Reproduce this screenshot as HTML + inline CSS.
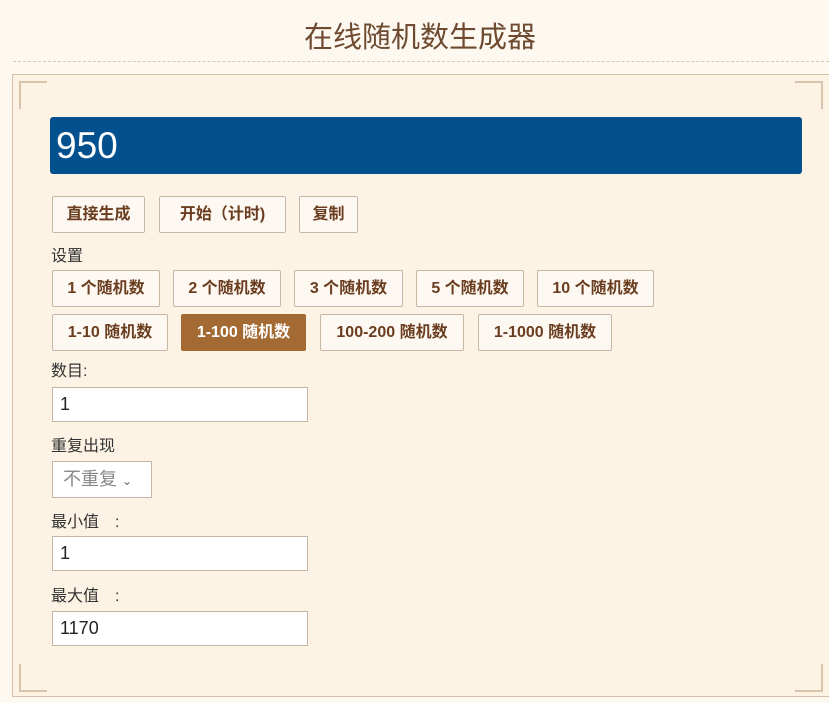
<!DOCTYPE html>
<html><head><meta charset="utf-8"><style>
body{margin:0;width:829px;height:703px;background:#fdf9f1;font-family:"Liberation Sans","Noto Sans CJK SC",sans-serif;position:relative;overflow:hidden}
.title{position:absolute;top:14px;left:0;width:840px;text-align:center;font-size:29px;color:#6e4a30}
.dash{position:absolute;top:61px;left:13px;width:816px;border-top:1px dashed #d8c8b0}
.box{position:absolute;left:12px;top:74px;width:830px;height:621px;border:1px solid #d6bfa5;background:#fcf3e5}
.res{position:absolute;left:50px;top:117px;width:752px;height:57px;background:#03508f;border-radius:3px;color:#fff;font-size:37px;line-height:58px;padding-left:6px;box-sizing:border-box}
.btn{position:absolute;height:37px;border:1px solid #c9b7a6;border-radius:2px;background:#fdf8f1;color:#6a3d20;font-weight:bold;font-size:16px;line-height:36px;text-align:center;box-sizing:border-box}
.btn.on{background:#a46a34;color:#fff;border-color:#a46a34}
.lbl{position:absolute;left:51px;font-size:16px;color:#333}
.inp{position:absolute;left:52px;width:256px;height:35px;background:#fff;border:1px solid #c5b5a5;box-sizing:border-box;font-size:18px;line-height:33px;padding-left:7px;color:#222}
.sel{position:absolute;left:52px;top:461px;width:100px;height:37px;background:#fff;border:1px solid #c5b5a5;box-sizing:border-box;font-size:18px;color:#888;line-height:35px;padding-left:10px}
.corner{position:absolute;width:26px;height:26px;border:0 solid #d8c3ad}
</style></head><body>
<div class="title">在线随机数生成器</div>
<div class="dash"></div>
<div class="box"></div>
<div class="corner" style="left:19px;top:81px;border-top-width:2px;border-left-width:2px"></div>
<div class="corner" style="left:795px;top:81px;border-top-width:2px;border-right-width:2px"></div>
<div class="corner" style="left:19px;top:664px;border-bottom-width:2px;border-left-width:2px"></div>
<div class="corner" style="left:795px;top:664px;border-bottom-width:2px;border-right-width:2px"></div>
<div class="res">950</div>
<div class="btn" style="left:52px;top:196px;width:93px">直接生成</div>
<div class="btn" style="left:159px;top:196px;width:127px">开始（计时)</div>
<div class="btn" style="left:299px;top:196px;width:59px">复制</div>
<div class="lbl" style="top:242px">设置</div>
<div class="btn" style="left:52px;top:270px;width:108px">1 个随机数</div>
<div class="btn" style="left:173px;top:270px;width:108px">2 个随机数</div>
<div class="btn" style="left:294px;top:270px;width:109px">3 个随机数</div>
<div class="btn" style="left:416px;top:270px;width:108px">5 个随机数</div>
<div class="btn" style="left:537px;top:270px;width:117px">10 个随机数</div>
<div class="btn" style="left:52px;top:314px;width:116px">1-10 随机数</div>
<div class="btn on" style="left:181px;top:314px;width:125px">1-100 随机数</div>
<div class="btn" style="left:320px;top:314px;width:144px">100-200 随机数</div>
<div class="btn" style="left:478px;top:314px;width:134px">1-1000 随机数</div>
<div class="lbl" style="top:357px">数目:</div>
<div class="inp" style="top:387px">1</div>
<div class="lbl" style="top:432px">重复出现</div>
<div class="sel">不重复 <span style="font-size:12px;color:#666">&#8964;</span></div>
<div class="lbl" style="top:508px">最小值　:</div>
<div class="inp" style="top:536px">1</div>
<div class="lbl" style="top:582px">最大值　:</div>
<div class="inp" style="top:611px">1170</div>
</body></html>
